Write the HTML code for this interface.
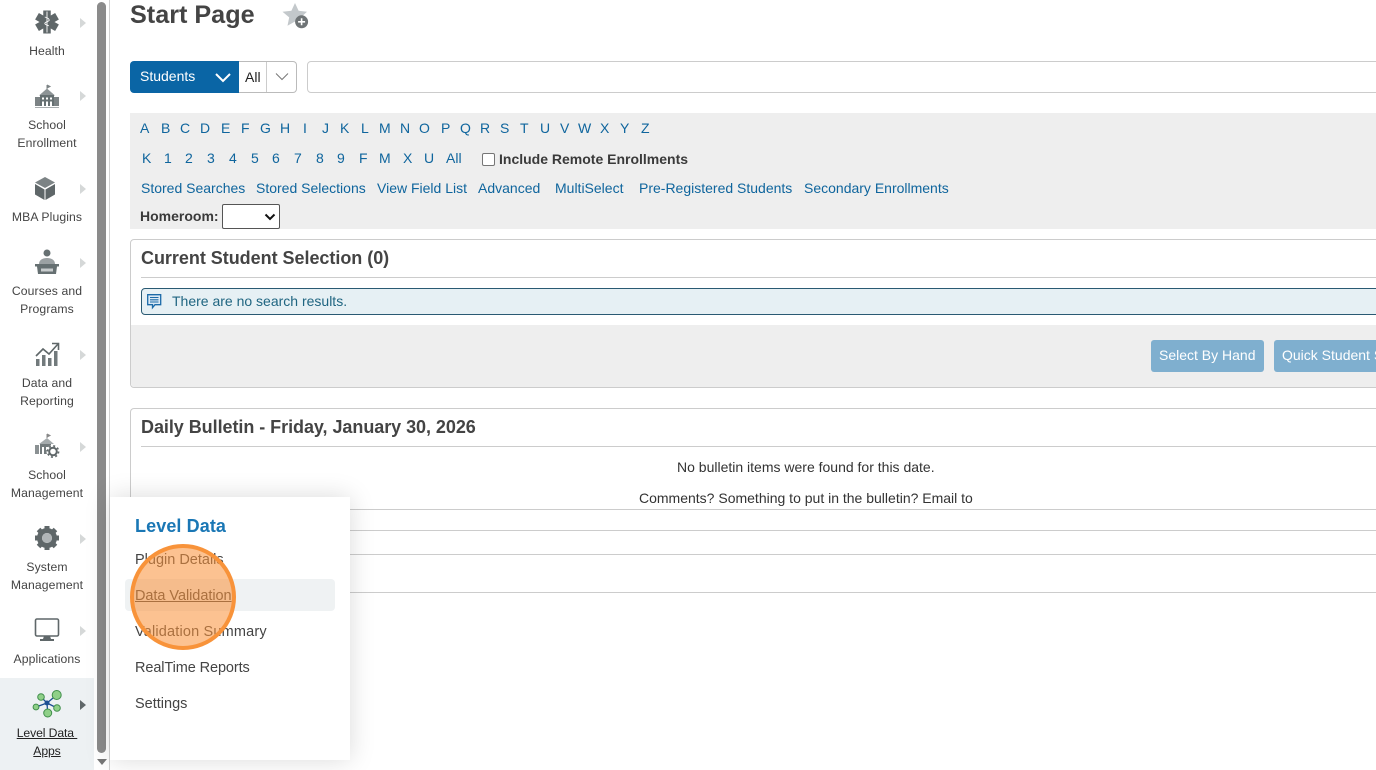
<!DOCTYPE html>
<html lang="en">
<head>
<meta charset="utf-8">
<title>Start Page</title>
<style>
html,body{margin:0;padding:0;width:1376px;height:770px;overflow:hidden;background:#fff;font-family:"Liberation Sans",sans-serif;color:#333}
*{box-sizing:border-box}
.a{position:absolute;white-space:nowrap}
.nav{font-size:12.2px;letter-spacing:.1px;color:#444;text-align:center;width:94px;left:0;line-height:18px}
.arrow{position:absolute;left:80px;width:0;height:0;border-left:6px solid #d5d8d8;border-top:5.5px solid transparent;border-bottom:5.5px solid transparent}
.l{position:absolute;font-size:14px;color:#0f659d;white-space:nowrap;line-height:16px}
.box{position:absolute;left:130px;width:1270px;border:1px solid #ccc;border-radius:4px;background:#fff}
.hr{position:absolute;left:141px;width:1240px;height:1px;background:#ccc}
.btn{position:absolute;top:340px;height:32px;background:#7fafcf;border-radius:3px;color:#fff;font-size:14px;line-height:31px;padding:0 8px;white-space:nowrap}
.m{position:absolute;left:135px;font-size:14.5px;letter-spacing:.17px;color:#444;white-space:nowrap;line-height:18px}
svg{position:absolute;overflow:visible}
</style>
</head>
<body>

<!-- Main content -->
<div class="a" style="left:130px;top:0;font-size:25.2px;font-weight:bold;color:#444;line-height:30px">Start Page</div>
<svg style="left:280px;top:0" width="30" height="30" viewBox="0 0 30 30">
<path d="M15 3l3.600 7.800 8.400.9-6.200 5.700 1.700 8.300L15 21.500 7.500 25.700l1.700-8.300L2.500 11.700l8.900-.9z" fill="#c3c8cb"/>
<circle cx="21.600" cy="21.800" r="6.500" fill="#6f7476"/>
<path d="M21.600 18.300v7M18.100 21.800h7" stroke="#fff" stroke-width="1.600"/>
</svg>

<div class="a" style="left:130px;top:61px;width:110px;height:32px;background:#0a65a5;border-radius:4px 0 0 4px;color:#fff;font-size:14px;line-height:30px;padding-left:10px">Students</div>
<svg style="left:214px;top:72px" width="18" height="12" viewBox="0 0 18 12"><path d="M2 2l7 7 7-7" fill="none" stroke="#fff" stroke-width="2"/></svg>
<div class="a" style="left:239px;top:61px;width:58px;height:32px;border:1px solid #bbb;border-left:0;border-radius:0 4px 4px 0;background:#fff"></div>
<div class="a" style="left:245px;top:69px;font-size:14px;color:#222;line-height:16px">All</div>
<div class="a" style="left:266px;top:62px;width:1px;height:30px;background:#ccc"></div>
<svg style="left:274px;top:72px" width="16" height="10" viewBox="0 0 16 10"><path d="M2 1.500l6 6 6-6" fill="none" stroke="#777" stroke-width="1"/></svg>
<div class="a" style="left:307px;top:61px;width:1100px;height:32px;border:1px solid #ccc;border-radius:4px;background:#fff"></div>

<div class="a" style="left:130px;top:113px;width:1270px;height:116px;background:#eeeeee"></div>

<span class="l" style="left:140px;top:120px">A</span><span class="l" style="left:161px;top:120px">B</span><span class="l" style="left:180px;top:120px">C</span><span class="l" style="left:200px;top:120px">D</span><span class="l" style="left:221px;top:120px">E</span><span class="l" style="left:241px;top:120px">F</span><span class="l" style="left:260px;top:120px">G</span><span class="l" style="left:280px;top:120px">H</span><span class="l" style="left:303px;top:120px">I</span><span class="l" style="left:322px;top:120px">J</span><span class="l" style="left:340px;top:120px">K</span><span class="l" style="left:361px;top:120px">L</span><span class="l" style="left:379px;top:120px">M</span><span class="l" style="left:400px;top:120px">N</span><span class="l" style="left:419px;top:120px">O</span><span class="l" style="left:441px;top:120px">P</span><span class="l" style="left:460px;top:120px">Q</span><span class="l" style="left:480px;top:120px">R</span><span class="l" style="left:500px;top:120px">S</span><span class="l" style="left:520px;top:120px">T</span><span class="l" style="left:540px;top:120px">U</span><span class="l" style="left:560px;top:120px">V</span><span class="l" style="left:578px;top:120px">W</span><span class="l" style="left:600px;top:120px">X</span><span class="l" style="left:620px;top:120px">Y</span><span class="l" style="left:641px;top:120px">Z</span>

<span class="l" style="left:142px;top:150px">K</span><span class="l" style="left:164px;top:150px">1</span><span class="l" style="left:185px;top:150px">2</span><span class="l" style="left:207px;top:150px">3</span><span class="l" style="left:229px;top:150px">4</span><span class="l" style="left:251px;top:150px">5</span><span class="l" style="left:272px;top:150px">6</span><span class="l" style="left:294px;top:150px">7</span><span class="l" style="left:316px;top:150px">8</span><span class="l" style="left:337px;top:150px">9</span><span class="l" style="left:359px;top:150px">F</span><span class="l" style="left:379px;top:150px">M</span><span class="l" style="left:403px;top:150px">X</span><span class="l" style="left:424px;top:150px">U</span><span class="l" style="left:446px;top:150px">All</span>

<div class="a" style="left:482px;top:153px;width:13px;height:13px;border:1px solid #767676;border-radius:2px;background:#fff"></div>
<div class="a" style="left:499px;top:151px;font-size:14px;font-weight:bold;color:#3a3a3a;line-height:16px">Include Remote Enrollments</div>

<span class="l" style="left:141px;top:180px">Stored Searches</span>
<span class="l" style="left:256px;top:180px">Stored Selections</span>
<span class="l" style="left:377px;top:180px">View Field List</span>
<span class="l" style="left:478px;top:180px">Advanced</span>
<span class="l" style="left:555px;top:180px">MultiSelect</span>
<span class="l" style="left:639px;top:180px">Pre-Registered Students</span>
<span class="l" style="left:804px;top:180px">Secondary Enrollments</span>

<div class="a" style="left:140px;top:208px;font-size:14px;font-weight:bold;color:#3a3a3a;line-height:16px">Homeroom:</div>
<div class="a" style="left:222px;top:204px;width:58px;height:25px;border:1px solid #555;border-radius:2px;background:#fff"></div>
<svg style="left:264px;top:213px" width="12" height="8" viewBox="0 0 12 8"><path d="M1.500 1.500L6 6l4.500-4.500" fill="none" stroke="#111" stroke-width="2"/></svg>

<div class="box" style="top:239px;height:149px"></div>
<div class="a" style="left:131px;top:325px;width:1260px;height:62px;background:#eeeeee;border-radius:0 0 4px 4px"></div>
<div class="a" style="left:141px;top:248px;font-size:18px;font-weight:bold;color:#444;line-height:20px;letter-spacing:-.03px">Current Student Selection (0)</div>
<div class="hr" style="top:277px"></div>
<div class="a" style="left:141px;top:288px;width:1250px;height:27px;background:#e6f0f4;border:1px solid #2a5a73;border-radius:4px"></div>
<svg style="left:147px;top:294px" width="15" height="15" viewBox="0 0 15 15"><path d="M.7.700h13v10H8l-2.500 3v-3H.7z" fill="#d9e9f5" stroke="#1b6aa8" stroke-width="1.300"/><path d="M3 3.500h8.500M3 5.800h8.500M3 8h8.500" stroke="#1b6aa8" stroke-width="1.100"/></svg>
<div class="a" style="left:172px;top:293px;font-size:14px;color:#1f6581;line-height:16px">There are no search results.</div>
<div class="btn" style="left:1151px;width:113px">Select By Hand</div>
<div class="btn" style="left:1274px;width:130px">Quick Student Search</div>

<div class="box" style="top:408px;height:185px;border-bottom:0;border-radius:4px 4px 0 0"></div>
<div class="a" style="left:141px;top:417px;font-size:18px;font-weight:bold;color:#444;line-height:20px;letter-spacing:-.05px">Daily Bulletin - Friday, January 30, 2026</div>
<div class="hr" style="top:446px"></div>
<div class="a" style="left:677px;top:459px;font-size:14px;color:#333;line-height:16px">No bulletin items were found for this date.</div>
<div class="a" style="left:639px;top:490px;font-size:14px;color:#333;line-height:16px">Comments? Something to put in the bulletin? Email to</div>
<div class="a" style="left:131px;top:509px;width:1269px;height:1px;background:#ccc"></div>
<div class="a" style="left:131px;top:530px;width:1269px;height:1px;background:#ccc"></div>
<div class="a" style="left:131px;top:554px;width:1269px;height:1px;background:#ccc"></div>
<div class="a" style="left:131px;top:592px;width:1269px;height:1px;background:#ccc"></div>

<!-- Sidebar -->
<div class="a" style="left:0;top:0;width:94px;height:770px;background:#fff"></div>
<div class="a" style="left:0;top:678px;width:94px;height:92px;background:#edf1f3"></div>
<div class="a" style="left:94px;top:0;width:15px;height:770px;background:#fff"></div>
<div class="a" style="left:97px;top:2px;width:9px;height:751px;background:#8b8b8b;border-radius:5px"></div>
<svg style="left:97px;top:758px" width="10" height="8" viewBox="0 0 10 8"><path d="M0 1h10L5 7z" fill="#777"/></svg>
<div class="a" style="left:109px;top:0;width:1px;height:770px;background:#d2d2d2"></div>

<!-- Health -->
<svg style="left:34px;top:9px" width="26" height="26" viewBox="0 0 26 26"><path d="M13 1.500v23M3 7.250l20 11.500M23 7.250L3 18.750" stroke="#5f6769" stroke-width="7.500" fill="none"/><path d="M13 2.500v21" stroke="#fff" stroke-width=".9"/><path d="M10.800 8c3 .8 4.400 2 4.400 3.200s-4.400 1.800-4.400 3.200 2.400 1.600 4 2.400" fill="none" stroke="#fff" stroke-width=".9"/></svg>
<div class="arrow" style="top:18px"></div>
<div class="a nav" style="top:42px">Health</div>

<!-- School Enrollment -->
<svg style="left:34px;top:84px" width="26" height="24" viewBox="0 0 26 24"><path d="M13 1v4M13 1l3 1.500L13 4" stroke="#7c8385" fill="#7c8385"/><path d="M5 11.500L13 4.500l8 7z" fill="#8d9496"/><path d="M1 13h5v9H1zM20 13h5v9h-5z" fill="#7c8385"/><path d="M6 11h14v11H6z" fill="#667072"/><path d="M8 13.500h2v2H8zM12 13.500h2v2h-2zM16 13.500h2v2h-2zM8 17.500h2v4.500H8zM12 17.500h2v4.500h-2zM16 17.500h2v4.500h-2z" fill="#fff"/><path d="M1 23.500h24" stroke="#a8adaf"/></svg>
<div class="arrow" style="top:91px"></div>
<div class="a nav" style="top:116px">School<br>Enrollment</div>

<!-- MBA Plugins -->
<svg style="left:34px;top:176px" width="22" height="25" viewBox="0 0 22 25"><path d="M11 1l10 5.500L11 12 1 6.500z" fill="#7c8385"/><path d="M1 8l9.500 5.500V24L1 18.500z" fill="#5f6769"/><path d="M21 8l-9.500 5.500V24l9.500-5.500z" fill="#5f6769"/></svg>
<div class="arrow" style="top:184px"></div>
<div class="a nav" style="top:208px">MBA Plugins</div>

<!-- Courses -->
<svg style="left:34px;top:249px" width="26" height="26" viewBox="0 0 26 26"><circle cx="13" cy="4" r="3.500" fill="#667072"/><path d="M5 15c0-4 3.500-6 8-6s8 2 8 6z" fill="#9ba1a3"/><path d="M1 15h24v2.500H1z" fill="#667072"/><path d="M3 17.500h20l-1 7.500H4z" fill="#667072"/><path d="M7 19.500h12v3H7z" fill="#c8cccd"/></svg>
<div class="arrow" style="top:258px"></div>
<div class="a nav" style="top:282px">Courses and<br>Programs</div>

<!-- Data and Reporting -->
<svg style="left:34px;top:341px" width="26" height="26" viewBox="0 0 26 26"><path d="M2 15l7-7 6 5L24 3" fill="none" stroke="#5f6769" stroke-width="1.600"/><path d="M18 2.500h6.500V9" fill="none" stroke="#5f6769" stroke-width="1.600"/><path d="M2 18h3.500v7H2zM8 14h3.500v11H8zM14 17h3.500v8H14zM20 10h3.500v15H20z" fill="#727a7c"/></svg>
<div class="arrow" style="top:350px"></div>
<div class="a nav" style="top:374px">Data and<br>Reporting</div>

<!-- School Management -->
<svg style="left:34px;top:433px" width="26" height="26" viewBox="0 0 26 26"><path d="M13 1v4M13 1l3 1.500L13 4" stroke="#888" fill="#888"/><path d="M5 11l8-6 7 6z" fill="#a5abad"/><path d="M1 12h4v9H1z" fill="#8b9193"/><path d="M6 11h11v10H6z" fill="#737b7d"/><path d="M8 14h2v7H8zM12 14h2v3h-2z" fill="#fff"/><circle cx="19" cy="18.500" r="6.500" fill="#fff"/><circle cx="19" cy="18.500" r="3.800" fill="#fff" stroke="#5f6769" stroke-width="2"/><circle cx="19" cy="18.500" r="5.600" fill="none" stroke="#5f6769" stroke-width="1.600" stroke-dasharray="2 2.400"/></svg>
<div class="arrow" style="top:442px"></div>
<div class="a nav" style="top:466px">School<br>Management</div>

<!-- System Management -->
<svg style="left:34px;top:525px" width="26" height="26" viewBox="0 0 26 26"><circle cx="13" cy="13" r="7.500" fill="none" stroke="#5f6769" stroke-width="5"/><g fill="#5f6769"><rect x="10.500" y="1" width="5" height="5"/><rect x="10.500" y="20" width="5" height="5"/><rect x="1" y="10.500" width="5" height="5"/><rect x="20" y="10.500" width="5" height="5"/><rect x="10.500" y="1" width="5" height="5" transform="rotate(45 13 13)"/><rect x="10.500" y="20" width="5" height="5" transform="rotate(45 13 13)"/><rect x="1" y="10.500" width="5" height="5" transform="rotate(45 13 13)"/><rect x="20" y="10.500" width="5" height="5" transform="rotate(45 13 13)"/></g><circle cx="13" cy="13" r="5" fill="#b0b5b7"/></svg>
<div class="arrow" style="top:534px"></div>
<div class="a nav" style="top:558px">System<br>Management</div>

<!-- Applications -->
<svg style="left:34px;top:617px" width="26" height="26" viewBox="0 0 26 26"><rect x="1.500" y="2" width="23" height="17" rx="1.500" fill="#fff" stroke="#5f6769" stroke-width="1.600"/><path d="M10 19h6l1 3h3v2H6v-2h3z" fill="#5f6769"/></svg>
<div class="arrow" style="top:626px"></div>
<div class="a nav" style="top:650px">Applications</div>

<!-- Level Data Apps -->
<svg style="left:32px;top:689px" width="30" height="30" viewBox="0 0 30 30"><path d="M15 14L9 8M15 14L24.700 6M15 14L4 18M15 14l10 5M15 14l.7 10" stroke="#1c4f93" stroke-width="1.300"/><circle cx="9" cy="8" r="3.300" fill="#8fd088" stroke="#3f8e4a"/><circle cx="24.700" cy="6" r="4.500" fill="#8fd088" stroke="#3f8e4a"/><circle cx="4" cy="18" r="2.900" fill="#8fd088" stroke="#3f8e4a"/><circle cx="25" cy="19" r="3.300" fill="#8fd088" stroke="#3f8e4a"/><circle cx="15.700" cy="24" r="4" fill="#8fd088" stroke="#3f8e4a"/><circle cx="15" cy="14" r="2.500" fill="#1c4f93"/></svg>
<div class="arrow" style="top:700px;border-left-color:#5f6769"></div>
<div class="a nav" style="top:724px;color:#222;text-decoration:underline;letter-spacing:-.1px">Level Data&nbsp;<br>Apps</div>

<!-- Flyout -->
<div class="a" style="left:110px;top:497px;width:240px;height:263px;background:#fff;box-shadow:0 0 24px rgba(0,0,0,.15)"></div>
<div class="a" style="left:135px;top:515px;font-size:18px;font-weight:bold;color:#1a77b5;line-height:22px;letter-spacing:.1px">Level Data</div>
<div class="a" style="left:125px;top:579px;width:210px;height:32px;background:#eff2f3;border-radius:4px"></div>
<div class="m" style="top:551px;letter-spacing:0">Plugin Details</div>
<div class="m" style="top:587px;letter-spacing:-.05px;text-decoration:underline">Data Validation</div>
<div class="m" style="top:623px">Validation Summary</div>
<div class="m" style="top:659px;letter-spacing:-.1px">RealTime Reports</div>
<div class="m" style="top:695px;letter-spacing:0">Settings</div>

<!-- Highlight -->
<div class="a" style="left:130px;top:544px;width:106px;height:106px;border-radius:50%;background:rgba(249,147,58,.56);border:4px solid #f8933a"></div>

</body>
</html>
